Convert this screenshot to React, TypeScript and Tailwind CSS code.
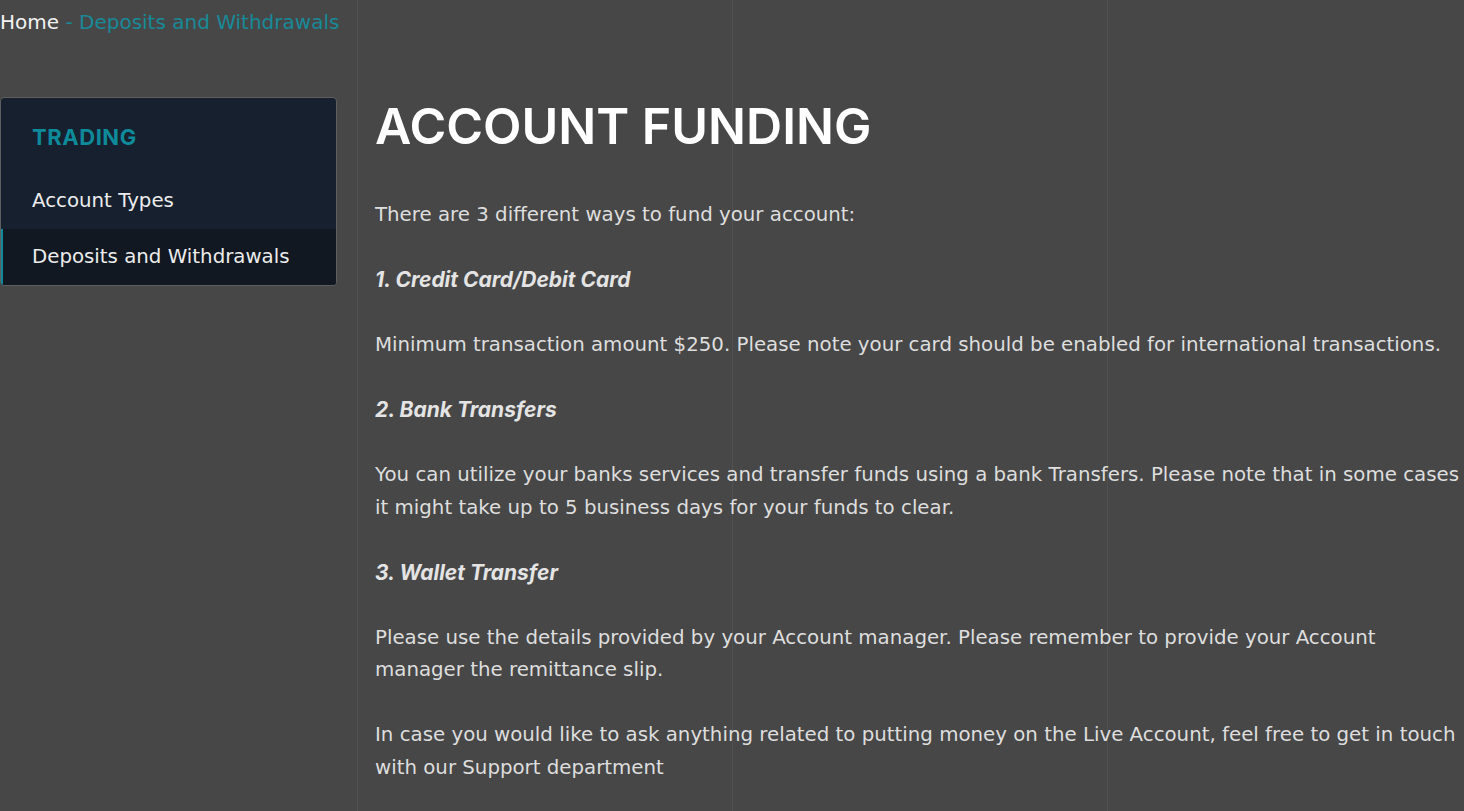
const body = { fontFamily: "'DejaVu Sans', 'Open Sans', sans-serif" };
const heading = { fontFamily: "Inter, 'Open Sans', sans-serif" };

const Section = ({ title }: { title: string }) => (
  <p className="mb-[32.5px] text-[21px] font-bold italic text-[#e4e4e4]" style={heading}>
    {title}
  </p>
);

const Para = ({ children }: { children: React.ReactNode }) => (
  <p className="mb-[32.5px] text-[#dedede]">{children}</p>
);

export default function App() {
  return (
    <div
      className="relative min-h-screen overflow-hidden bg-[#474747] text-[19.8px] leading-[32.5px]"
      style={body}
    >
      {/* background grid lines */}
      <div className="pointer-events-none absolute inset-0 flex justify-center">
        <div className="grid h-full w-[1500px] shrink-0 grid-cols-4">
          <div className="border-l border-[#515151]" />
          <div className="border-l border-[#515151]" />
          <div className="border-l border-[#515151]" />
          <div className="border-x border-[#515151]" />
        </div>
      </div>

      <div className="relative">
        <div className="h-[37px] pt-[6px] text-[20px] leading-[32px]">
          <a href="#" className="text-[#f2f2f2]">Home</a>
          <span className="text-[#178a99]"> - Deposits and Withdrawals</span>
        </div>

        <div className="mt-[60px] flex items-start gap-[38px]">
          <nav className="w-[337px] shrink-0 overflow-hidden rounded-[4px] border border-[#5e5e5e] bg-[#16202e]">
            <div
              className="flex h-[75px] items-center px-[31px] pt-[3px] text-[22px] font-bold uppercase tracking-wide text-[#0e8a9a]"
              style={heading}
            >
              Trading
            </div>
            <a href="#" className="flex h-[56px] items-center px-[31px] text-[#ececec]">
              Account Types
            </a>
            <a
              href="#"
              className="flex h-[56px] items-center border-l-2 border-[#0e8a9a] bg-[#111821] pl-[29px] text-[#ececec]"
            >
              Deposits and Withdrawals
            </a>
          </nav>

          <main className="w-[1089px] shrink-0">
            <h1
              className="mb-[44px] text-[50px] font-semibold leading-[58px] text-white"
              style={heading}
            >
              ACCOUNT FUNDING
            </h1>
            <Para>There are 3 different ways to fund your account:</Para>
            <Section title="1. Credit Card/Debit Card" />
            <Para>
              Minimum transaction amount $250. Please note your card should be enabled for
              international transactions.
            </Para>
            <Section title="2. Bank Transfers" />
            <Para>
              You can utilize your banks services and transfer funds using a bank Transfers.
              Please note that in some cases it might take up to 5 business days for your funds
              to clear.
            </Para>
            <Section title="3. Wallet Transfer" />
            <Para>
              Please use the details provided by your Account manager. Please remember to provide
              your Account manager the remittance slip.
            </Para>
            <Para>
              In case you would like to ask anything related to putting money on the Live Account,
              feel free to get in touch with our Support department
            </Para>
          </main>
        </div>
      </div>
    </div>
  );
}
